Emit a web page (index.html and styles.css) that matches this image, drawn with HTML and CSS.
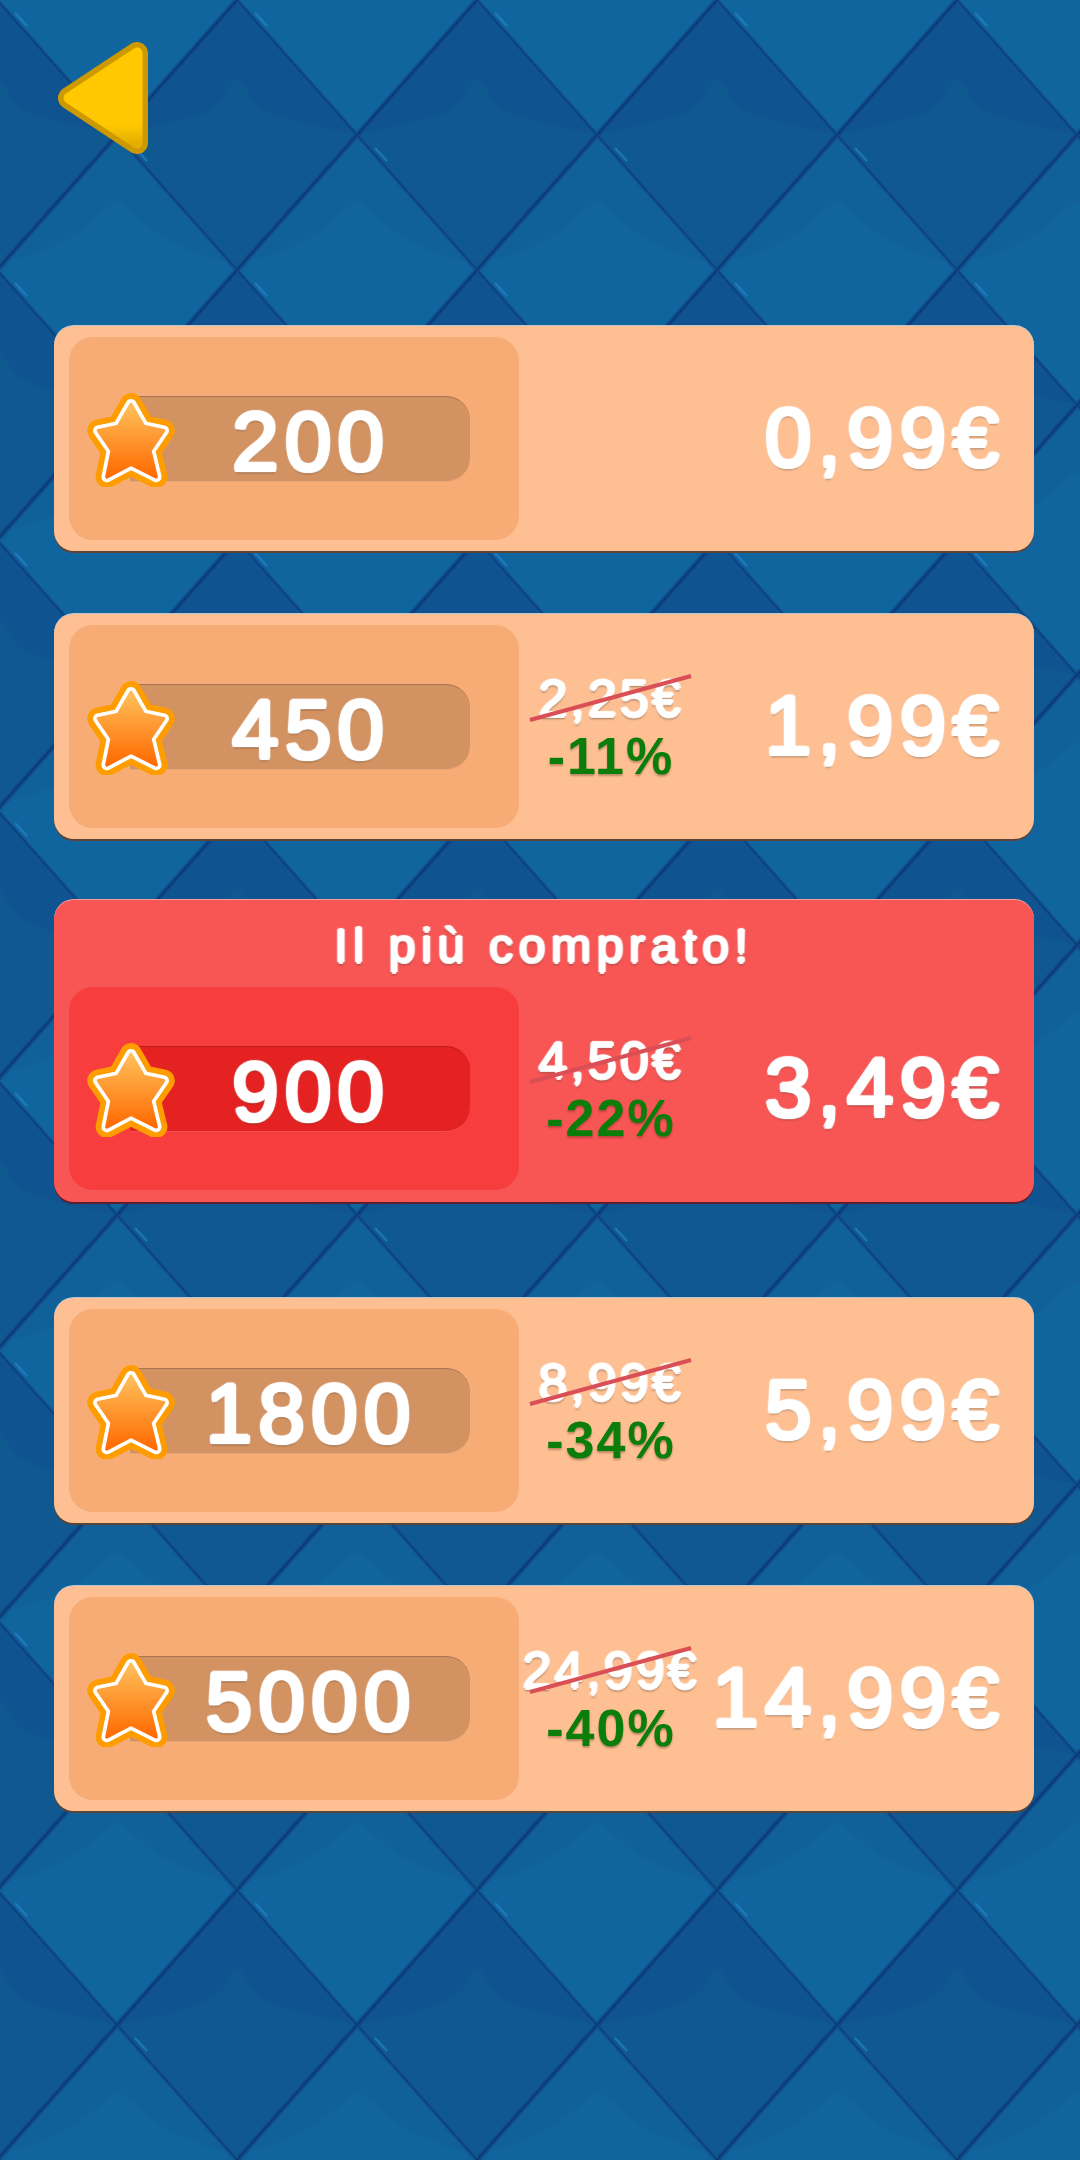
FILE: index.html
```html
<!DOCTYPE html>
<html lang="it">
<head>
  <meta charset="UTF-8" />
  <meta name="viewport" content="width=device-width, initial-scale=1.0"/>
  <title>Negozio</title>
  <link rel="stylesheet" href="styles.css">
</head>
<body>
  <!-- tiled background + shared star symbol -->
  <svg class="bg" width="1080" height="2160" aria-hidden="true">
    <defs>
      <linearGradient id="starFill" x1="0" y1="0" x2="0" y2="1">
        <stop offset="0" stop-color="#ffc05c"/>
        <stop offset="1" stop-color="#ff6a00"/>
      </linearGradient>
      <linearGradient id="arrowFill" x1="0" y1="0" x2="0" y2="1">
        <stop offset="0.8" stop-color="#ffc800"/>
        <stop offset="1" stop-color="#e6af00"/>
      </linearGradient>
      <symbol id="star" viewBox="18.5 13.5 85 91">
        <path d="M61 26 73 47 92 51 79 70 85 95 61 83 38 95 43 70 30 51 49 47Z" fill="#ff9d00" stroke="#ff9d00" stroke-width="21" stroke-linejoin="round"/>
        <path d="M61 26 73 47 92 51 79 70 85 95 61 83 38 95 43 70 30 51 49 47Z" fill="#fff" stroke="#fff" stroke-width="10" stroke-linejoin="round"/>
        <path d="M61 26 73 47 92 51 79 70 85 95 61 83 38 95 43 70 30 51 49 47Z" fill="url(#starFill)" stroke="url(#starFill)" stroke-width="3" stroke-linejoin="round"/>
      </symbol>
      <pattern id="tiles" width="240" height="270" patternUnits="userSpaceOnUse" patternTransform="translate(-3 0)">
        <rect width="240" height="270" fill="#11659f"/>
        <!-- light diamonds: darker shoulder on the upper edges -->
        <path d="M120 135 0 270 240 270Z" fill="#10619a"/>
        <path d="M120 203C110 203 100 226 62 244 40 254 30 256 12 262L8 270H232L228 262C210 256 200 254 178 244 140 226 130 203 120 203Z" fill="#11659f"/>
        <!-- dark diamonds: lower part is a little greener -->
        <path d="M0 0 120 135 0 270Z" fill="#0f5491"/>
        <path d="M240 0 120 135 240 270Z" fill="#0f5491"/>
        <path d="M0 80C10 80 6 100 30 112 58 124 92 128 118 135L0 270Z" fill="#105890"/>
        <path d="M240 80C230 80 234 100 210 112 182 124 148 128 122 135L240 270Z" fill="#105890"/>
        <!-- grooves -->
        <path d="M0 270 240 0" fill="none" stroke="#0d4a88" stroke-width="6" opacity=".6"/>
        <path d="M0 0 240 270" fill="none" stroke="#0d4f8e" stroke-width="5" opacity=".5"/>
        <path d="M0 270 240 0" fill="none" stroke="#0c3c79" stroke-width="2.5"/>
        <path d="M0 0 240 270" fill="none" stroke="#0d4280" stroke-width="2"/>
        <path d="M18 13 30 26M138 148 150 161" fill="none" stroke="#1f7fc4" stroke-width="2.5" opacity=".75"/>
      </pattern>
    </defs>
    <rect width="1080" height="2160" fill="url(#tiles)"/>
  </svg>

  <header class="topbar">
    <svg class="back" width="90" height="112" viewBox="58 42 90 112">
      <path d="M69 98 137 53V143Z" fill="#cc9a00" stroke="#cc9a00" stroke-width="22" stroke-linejoin="round"/>
      <path d="M69 98 137 53V143Z" fill="url(#arrowFill)" stroke="url(#arrowFill)" stroke-width="11" stroke-linejoin="round"/>
    </svg>
  </header>

  <main class="offers">
    <div class="offer">
      <div class="row">
        <div class="pack">
          <svg class="star"><use href="#star"/></svg>
          <div class="amount">200</div>
        </div>
        <div class="deal"></div>
        <div class="price">0,99€</div>
      </div>
    </div>

    <div class="offer">
      <div class="row">
        <div class="pack">
          <svg class="star"><use href="#star"/></svg>
          <div class="amount">450</div>
        </div>
        <div class="deal">
          <div class="old">2,25€<i class="strike"></i></div>
          <div class="off">-11%</div>
        </div>
        <div class="price">1,99€</div>
      </div>
    </div>

    <div class="offer hot">
      <div class="ribbon">Il più comprato!</div>
      <div class="row">
        <div class="pack">
          <svg class="star"><use href="#star"/></svg>
          <div class="amount">900</div>
        </div>
        <div class="deal">
          <div class="old">4,50€<i class="strike"></i></div>
          <div class="off">-22%</div>
        </div>
        <div class="price">3,49€</div>
      </div>
    </div>

    <div class="offer">
      <div class="row">
        <div class="pack">
          <svg class="star"><use href="#star"/></svg>
          <div class="amount">1800</div>
        </div>
        <div class="deal">
          <div class="old">8,99€<i class="strike"></i></div>
          <div class="off">-34%</div>
        </div>
        <div class="price">5,99€</div>
      </div>
    </div>

    <div class="offer">
      <div class="row">
        <div class="pack">
          <svg class="star"><use href="#star"/></svg>
          <div class="amount">5000</div>
        </div>
        <div class="deal">
          <div class="old">24,99€<i class="strike"></i></div>
          <div class="off">-40%</div>
        </div>
        <div class="price">14,99€</div>
      </div>
    </div>
  </main>
</body>
</html>
```

FILE: styles.css
```css
* {
  box-sizing: border-box;
  font-family: 'Liberation Sans', Arial, sans-serif;
}

body {
  margin: 0;
  width: 1080px;
  height: 2160px;
  overflow: hidden;
  position: relative;
  background: #0f5c96;
  color: #fff;
}

.bg {
  position: absolute;
  top: 0;
  left: 0;
  z-index: -1;
}

.topbar {
  height: 326px;
  padding: 42px 0 0 58px;
}

.back {
  display: block;
}

.offers {
  display: flex;
  flex-direction: column;
  gap: 63px;
  margin-left: 54px;
  width: 980px;
}

.offer {
  background: #fec093;
  border-radius: 20px;
  padding: 11px 15px 11px;
  box-shadow: 0 2px 0 #5b4336, 0 -1px 0 #b9c6d2;
}

.row {
  display: flex;
  align-items: center;
  height: 203px;
}

.pack {
  position: relative;
  width: 450px;
  height: 100%;
  background: #f7ab75;
  border-radius: 24px;
  padding-left: 61px;
  display: flex;
  align-items: center;
  flex-shrink: 0;
}

.star {
  position: absolute;
  left: 17px;
  top: 54px;
  width: 90px;
  height: 96px;
}

.amount {
  width: 340px;
  height: 86px;
  padding-left: 22px;
  background: #d39262;
  border-top: 1px solid #a8744f;
  border-bottom: 1px solid #e6a677;
  border-radius: 0 24px 24px 0;
  text-align: center;
  font-size: 84px;
  line-height: 88px;
  letter-spacing: 6px;
}

.amount, .price {
  text-shadow:
    2px 0 1px #fff, -2px 0 1px #fff, 0 2px 1px #fff, 0 -2px 1px #fff,
    1.5px 1.5px 1px #fff, -1.5px 1.5px 1px #fff, 1.5px -1.5px 1px #fff, -1.5px -1.5px 1px #fff,
    0 3px 2px rgba(70, 40, 20, .55);
}

.old, .ribbon {
  text-shadow:
    1.5px 0 1px #fff, -1.5px 0 1px #fff, 0 1.5px 1px #fff, 0 -1.5px 1px #fff,
    0 3px 2px rgba(70, 40, 20, .5);
}

.deal {
  width: 170px;
  margin-left: 7px;
  display: flex;
  flex-direction: column;
  align-items: center;
  flex-shrink: 0;
}

.old {
  position: relative;
  font-size: 52px;
  line-height: 56px;
  letter-spacing: 3px;
  white-space: nowrap;
}

.strike {
  position: absolute;
  left: 50%;
  top: 50%;
  width: 167px;
  height: 4px;
  margin: -2px 0 0 -84px;
  background: #d94f55;
  transform: rotate(-15.3deg);
}

.off {
  font-size: 52px;
  line-height: 56px;
  font-weight: bold;
  letter-spacing: 2px;
  color: #0a7d0a;
  white-space: nowrap;
  margin-top: 2px;
  text-shadow: 0 2px 2px rgba(70, 40, 20, .35);
}

.price {
  flex: 1;
  text-align: right;
  padding-right: 14px;
  font-size: 84px;
  line-height: 84px;
  letter-spacing: 6px;
  white-space: nowrap;
  margin-top: -3px;
}

.hot {
  background: #f85555;
  margin-top: -2px;
  margin-bottom: 33px;
  padding-top: 0;
  padding-bottom: 12px;
  box-shadow: 0 2px 0 #5a2030, 0 -1px 0 #f7a0a0;
}

.hot .pack {
  background: #f73d3d;
}

.hot .amount {
  background: #e42222;
  border-top-color: #bb1c1c;
  border-bottom-color: #f25050;
}

.ribbon {
  height: 87px;
  padding-top: 18px;
  text-align: center;
  font-size: 48px;
  line-height: 56px;
  letter-spacing: 5.7px;
}
```
